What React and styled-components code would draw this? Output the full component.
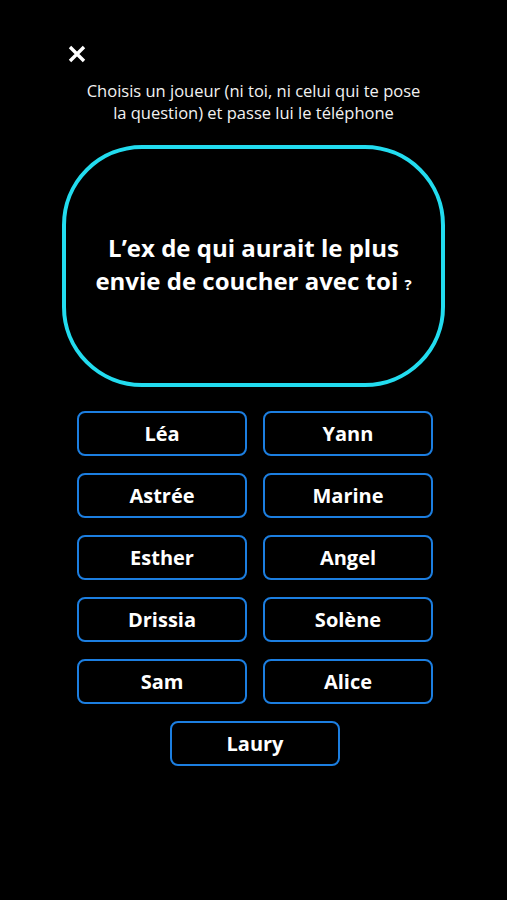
import React from 'react';
import styled, { createGlobalStyle } from 'styled-components';

const GlobalStyle = createGlobalStyle`
  html, body {
    margin: 0;
    padding: 0;
    background: #000;
  }
  * {
    box-sizing: border-box;
  }
`;

const PLAYERS = ['Léa', 'Yann', 'Astrée', 'Marine', 'Esther', 'Angel', 'Drissia', 'Solène', 'Sam', 'Alice', 'Laury'];

const Screen = styled.div`
  width: 507px;
  height: 900px;
  background: #000;
  color: #fff;
  font-family: 'Open Sans', Lato, sans-serif;
  display: flex;
  flex-direction: column;
  align-items: center;
  padding-top: 45px;
`;

const TopBar = styled.div`
  width: 100%;
  padding-left: 68px;
  height: 18px;
`;

const CloseButton = styled.button`
  background: none;
  border: none;
  padding: 0;
  width: 18px;
  height: 18px;
  display: block;
  cursor: pointer;
`;

const Instruction = styled.p`
  margin: 17px 0 0;
  font-size: 16.5px;
  line-height: 22px;
  text-align: center;
  color: #f2f2f2;
`;

const QuestionCard = styled.div`
  margin-top: 21px;
  width: 383px;
  height: 242px;
  border: 4px solid #22dcef;
  border-radius: 80px;
  display: flex;
  align-items: center;
  justify-content: center;
  padding: 0 20px;
`;

const QuestionText = styled.h1`
  margin: 0;
  font-size: 24px;
  line-height: 33px;
  font-weight: 700;
  text-align: center;
`;

const Mark = styled.span`
  font-size: 15px;
`;

const PlayerGrid = styled.div`
  margin-top: 24px;
  display: grid;
  grid-template-columns: 170px 170px;
  column-gap: 16px;
  row-gap: 17px;
  margin-left: 3px;
`;

const PlayerButton = styled.button`
  height: 45px;
  background: #000;
  border: 2px solid #1c7ee0;
  border-radius: 8px;
  color: #fff;
  font-family: inherit;
  font-size: 20px;
  font-weight: 700;
  cursor: pointer;
  ${p => p.$centered && `
    grid-column: 1 / span 2;
    justify-self: center;
    width: 170px;
  `}
`;

const CloseIcon = () => (
  <svg width="18" height="18" viewBox="0 0 18 18">
    <path d="M2 2 L16 16 M16 2 L2 16" stroke="#fff" strokeWidth="3.4" />
  </svg>
);

const App = () => (
  <>
    <GlobalStyle />
    <Screen>
      <TopBar>
        <CloseButton aria-label="Fermer"><CloseIcon /></CloseButton>
      </TopBar>
      <Instruction>
        Choisis un joueur (ni toi, ni celui qui te pose<br />
        la question) et passe lui le téléphone
      </Instruction>
      <QuestionCard>
        <QuestionText>
          L’ex de qui aurait le plus<br />
          envie de coucher avec toi <Mark>?</Mark>
        </QuestionText>
      </QuestionCard>
      <PlayerGrid>
        {PLAYERS.map((name, i) => (
          <PlayerButton key={name} $centered={i === PLAYERS.length - 1 && PLAYERS.length % 2 === 1}>
            {name}
          </PlayerButton>
        ))}
      </PlayerGrid>
    </Screen>
  </>
);

export default App;
